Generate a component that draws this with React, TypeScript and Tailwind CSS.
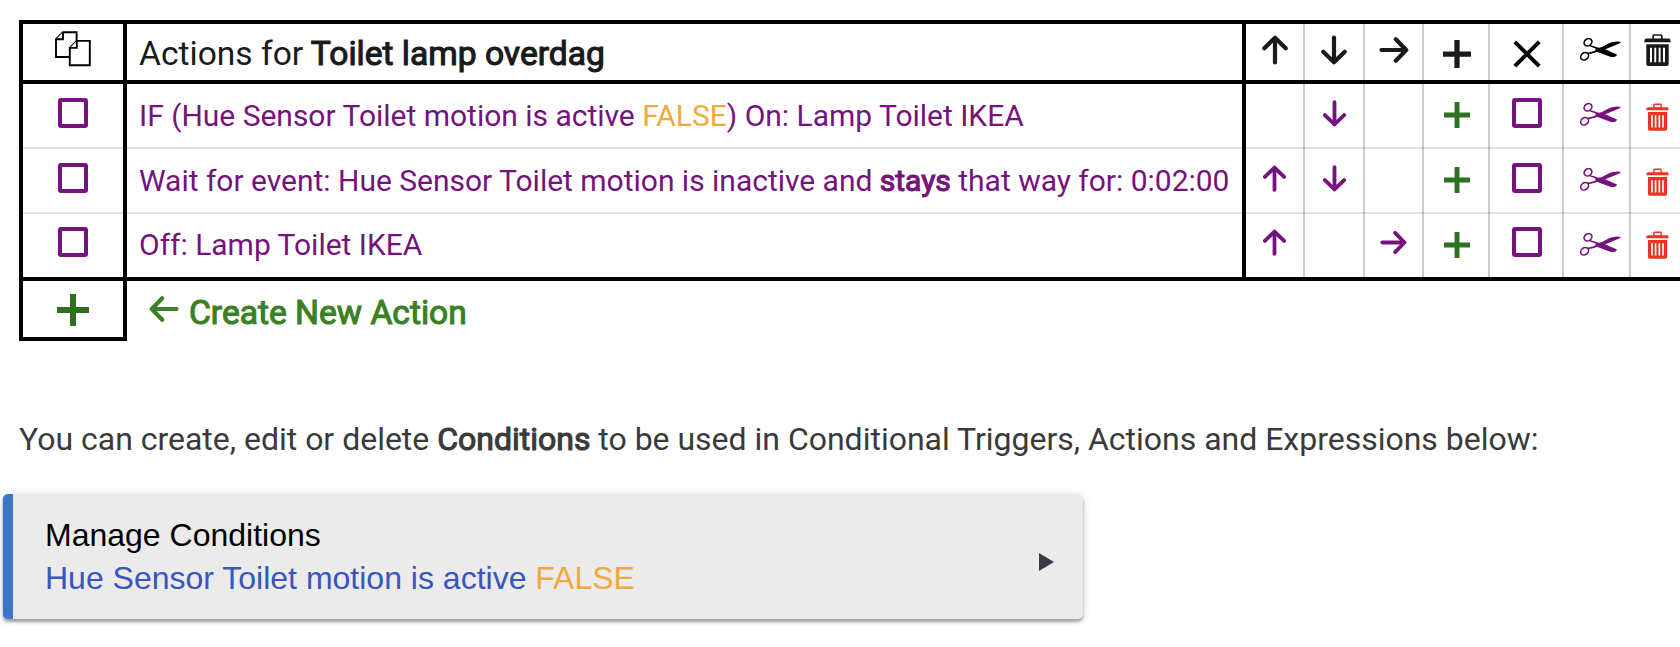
import React from "react";
import clsx from "clsx";

type Dir = "up" | "down" | "left" | "right";

const rotation: Record<Dir, string> = {
  up: "",
  down: "rotate-180",
  left: "-rotate-90",
  right: "rotate-90",
};

const Arrow = ({ dir, className }: { dir: Dir; className?: string }) => (
  <svg
    viewBox="0 0 30 30"
    fill="none"
    stroke="currentColor"
    strokeWidth="4.2"
    strokeLinecap="round"
    strokeLinejoin="round"
    className={clsx("shrink-0", rotation[dir], className)}
  >
    <path d="M15 27.5V2.8M4.3 13.2L15 2.8l10.7 10.4" />
  </svg>
);

const Plus = ({ className }: { className?: string }) => (
  <svg viewBox="0 0 32 32" stroke="currentColor" strokeWidth="6" className={clsx("shrink-0", className)}>
    <path d="M16 0v32M0 16h32" />
  </svg>
);

const Cross = ({ className }: { className?: string }) => (
  <svg viewBox="0 0 28 28" stroke="currentColor" strokeWidth="4" className={clsx("shrink-0", className)}>
    <path d="M1.8 1.8l24.4 24.4M26.2 1.8L1.8 26.2" />
  </svg>
);

const Box = ({ className }: { className?: string }) => (
  <span className={clsx("block size-[30px] shrink-0 rounded-[3px] border-4 border-[#75127d]", className)} />
);

const Copy = ({ className }: { className?: string }) => (
  <svg viewBox="0 0 36 36" fill="#fff" stroke="#000" strokeWidth="1.9" className={clsx("shrink-0", className)}>
    <path d="M8 1.2H21.6V26H1V8.2z" />
    <path d="M8 1.2V8.2H1" />
    <path d="M21.8 9.9H34.8V34.2H14.8V16.9z" />
    <path d="M21.8 9.9V16.9H14.8" />
  </svg>
);

const Scissors = ({ className }: { className?: string }) => (
  <svg viewBox="0 0 41 24" fill="none" stroke="currentColor" className={clsx("shrink-0", className)}>
    <ellipse cx="8" cy="4.3" rx="4.1" ry="3.4" strokeWidth="1.6" transform="rotate(-35 8 4.3)" />
    <ellipse cx="4.6" cy="18.3" rx="4.2" ry="3.4" strokeWidth="1.6" transform="rotate(-40 4.6 18.3)" />
    <path d="M10 7.6c2 1.300 5 1 8.500 3.400M7.600 15.600c2.500-1 6-.6 10-3" strokeWidth="1.700" />
    {/* blades */}
    <path
      d="M15 12.800L28 5.700C33 3.500 38 2.800 41 4.100C39.500 6.200 35 6.800 22 13z"
      fill="currentColor"
      stroke="none"
    />
    <path
      d="M15.500 9.900L21 9.500L37 16.400C36 19 33.500 19.800 29.500 18.500L15.500 13.300z"
      fill="currentColor"
      stroke="none"
    />
  </svg>
);

const Trash = ({ className }: { className?: string }) => (
  <svg viewBox="0 0 27 32" fill="currentColor" className={clsx("shrink-0", className)}>
    <path d="M9.200 5V1.900q0-.9.9-.9h6.800q.9 0 .9.900V5" fill="none" stroke="currentColor" strokeWidth="1.700" />
    <path d="M2 4.500h23q1.400 0 1.700 3.700H.3Q.6 4.500 2 4.500z" />
    <path
      fillRule="evenodd"
      d="M2.300 10.200h22.400V30q0 2-2 2H4.300q-2 0-2-2zM6 13.800v14.400h2V13.800zM10.300 13.800v14.400h1.900V13.800zM14.700 13.800v14.400h1.900V13.800zM19 13.800v14.400h2V13.800z"
    />
  </svg>
);

const Strong = ({ children }: { children: React.ReactNode }) => (
  <b className="font-normal [-webkit-text-stroke:1.1px_currentColor]">{children}</b>
);

const rowGrid = "grid grid-cols-[104px_1119px_59px_60px_59px_66px_74px_67px_53px]";
const mainCell = "border-r-4 border-black";
const iconCell = "flex items-start justify-center border-r-2 border-black/20";

type Action = {
  text: React.ReactNode;
  up?: boolean;
  down?: boolean;
  right?: boolean;
};

const actions: Action[] = [
  {
    text: (
      <>
        IF (Hue Sensor Toilet motion is active <span className="text-[#f2a93b]">FALSE</span>) On: Lamp Toilet IKEA
      </>
    ),
    down: true,
  },
  {
    text: (
      <>
        Wait for event: Hue Sensor Toilet motion is inactive and <Strong>stays</Strong> that way for: 0:02:00
      </>
    ),
    up: true,
    down: true,
  },
  { text: "Off: Lamp Toilet IKEA", up: true, right: true },
];

const ActionRow = ({ action, last }: { action: Action; last: boolean }) => {
  const top = last ? "mt-[13px]" : "mt-[14px]";
  const arrow = clsx("size-[27px]", last ? "mt-[14.5px]" : "mt-[15.5px]");
  return (
    <div
      className={clsx(
        rowGrid,
        "text-[#75127d]",
        last ? "h-[63px]" : "h-[65px] shadow-[inset_0_-2px_0_rgba(0,0,0,0.12)]"
      )}
    >
      <div className={clsx(mainCell, "flex items-start justify-center")}>
        <Box className={top} />
      </div>
      <div
        className={clsx(
          mainCell,
          "whitespace-nowrap pl-3 text-[30px] tracking-[-0.012px]",
          last ? "leading-[62px]" : "leading-[64px]"
        )}
      >
        {action.text}
      </div>
      <div className={iconCell}>{action.up && <Arrow dir="up" className={arrow} />}</div>
      <div className={iconCell}>{action.down && <Arrow dir="down" className={arrow} />}</div>
      <div className={iconCell}>{action.right && <Arrow dir="right" className={arrow} />}</div>
      <div className={iconCell}>
        <Plus className="ml-px mt-[18px] size-[26px] text-[#2f6f22]" />
      </div>
      <div className={iconCell}>
        <Box className={clsx("ml-px", top)} />
      </div>
      <div className={iconCell}>
        <Scissors className="ml-[7px] mt-[19px] h-6 w-[41px]" />
      </div>
      <div className="flex items-start justify-center">
        <Trash className={clsx("h-7 w-[23px] text-[#ec3323]", last ? "mt-[17px]" : "mt-[18.5px]")} />
      </div>
    </div>
  );
};

const ActionsTable = () => (
  <section className="ml-[19px] mt-5 w-[1665px]">
    <div className="border-y-4 border-l-4 border-black">
      <div className={clsx(rowGrid, "h-[60px] border-b-4 border-black text-[#1a1a1a]")}>
        <div className={clsx(mainCell, "flex items-start justify-center")}>
          <Copy className="mt-[7px] size-9" />
        </div>
        <div className={clsx(mainCell, "whitespace-nowrap pl-3 text-[33.6px] leading-[59px]")}>
          Actions for <Strong>Toilet lamp overdag</Strong>
        </div>
        <div className={iconCell}>
          <Arrow dir="up" className="mt-[11px] size-[30px]" />
        </div>
        <div className={iconCell}>
          <Arrow dir="down" className="mt-[11px] size-[30px]" />
        </div>
        <div className={iconCell}>
          <Arrow dir="right" className="mt-[11px] size-[30px]" />
        </div>
        <div className={iconCell}>
          <Plus className="ml-px mt-4 size-[28px]" />
        </div>
        <div className={iconCell}>
          <Cross className="ml-px mt-4 size-7 text-black" />
        </div>
        <div className={iconCell}>
          <Scissors className="ml-[7px] mt-[14px] h-6 w-[41px] text-black" />
        </div>
        <div className="flex items-start justify-center">
          <Trash className="mt-[10px] h-8 w-[27px]" />
        </div>
      </div>
      {actions.map((action, i) => (
        <ActionRow key={i} action={action} last={i === actions.length - 1} />
      ))}
    </div>

    {/* add row */}
    <div className="flex h-[60px] items-start text-[#388124]">
      <div className="flex h-[60px] w-[108px] justify-center border-4 border-t-0 border-black">
        <Plus className="mt-[13px] size-8 text-[#2f6f22]" />
      </div>
      <Arrow dir="left" className="ml-[22px] mt-[13px] size-[30px]" />
      <span className="ml-[10px] whitespace-nowrap text-[33.6px] leading-[63px]">
        <Strong>Create New Action</Strong>
      </span>
    </div>
  </section>
);

const ConditionsCard = () => (
  <div className="ml-[3px] mt-[35px] flex h-[125px] w-[1080px] items-center justify-between rounded-[5px] border-l-[10px] border-[#3a75c6] bg-[#ebebeb] pl-8 pr-[29px] font-['Liberation_Sans',Arial,sans-serif] text-[32px] leading-[43px] shadow-[0_3px_3px_rgba(0,0,0,0.32),0_1px_10px_rgba(0,0,0,0.14)]">
    <div>
      <div className="text-black">Manage Conditions</div>
      <div className="text-[#3955be]">
        Hue Sensor Toilet motion is active <span className="text-[#f2a93b]">FALSE</span>
      </div>
    </div>
    <svg viewBox="0 0 15 18" className="mt-[11px] h-[18px] w-[15px]">
      <path d="M0 0l15 9-15 9z" fill="#383b41" />
    </svg>
  </div>
);

export default function App() {
  return (
    <main className="flow-root h-[647px] w-full overflow-hidden bg-white font-['Roboto',sans-serif]">
      <ActionsTable />
      <p className="ml-[19px] mt-[78px] whitespace-nowrap text-[32px] leading-[40px] tracking-[-0.01px] text-[#3a3a3a]">
        You can create, edit or delete <Strong>Conditions</Strong> to be used in Conditional Triggers, Actions and
        Expressions below:
      </p>
      <ConditionsCard />
    </main>
  );
}
